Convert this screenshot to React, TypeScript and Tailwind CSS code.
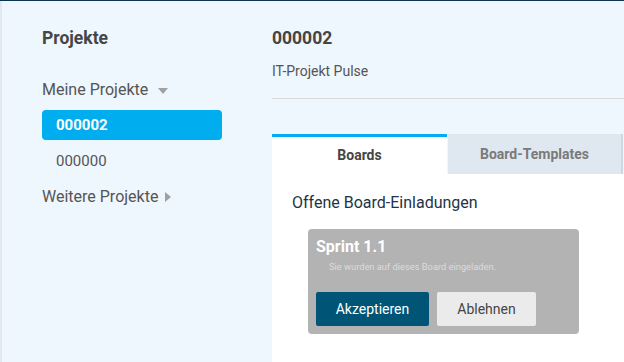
import React from 'react';

export default function App() {
  return (
    <div
      className="w-[624px] h-[362px] flex overflow-hidden bg-white border-t border-[#0b3650]"
      style={{ fontFamily: 'Roboto, "Liberation Sans", sans-serif' }}
    >
      {/* Sidebar */}
      <aside className="w-[272px] shrink-0 bg-[#eef6fe] border-l-2 border-[#e2e8ee] pl-[40px] pr-[50px] pt-[26px]">
        <h2 className="text-[17.5px] leading-[22px] font-bold text-[#454545]">Projekte</h2>
        <div className="mt-[30px] flex items-center text-[16px] leading-[22px] text-[#555]">
          Meine Projekte
          <span className="ml-[10px] mt-[2px] w-0 h-0 border-l-[5px] border-r-[5px] border-t-[6px] border-l-transparent border-r-transparent border-t-[#a0a0a0]" />
        </div>
        <div className="mt-[9px] h-[30px] rounded-[4px] bg-[#00aeef] flex items-center pl-[14px] text-[15px] font-bold text-white">
          000002
        </div>
        <div className="h-[40px] mt-[1px] flex items-center pl-[14px] text-[15px] text-[#555]">000000</div>
        <div className="flex items-center text-[16px] leading-[32px] text-[#555]">
          Weitere Projekte
          <span className="ml-[7px] w-0 h-0 border-t-[5px] border-b-[5px] border-l-[6px] border-t-transparent border-b-transparent border-l-[#a0a0a0]" />
        </div>
      </aside>

      {/* Main */}
      <main className="flex-1 flex flex-col">
        <div className="bg-[#eef6fe] h-[133px] flex flex-col">
          <div className="pt-[26px] text-[17.5px] leading-[22px] font-bold text-[#454545]">000002</div>
          <div className="mt-[13px] text-[14px] leading-[18px] text-[#555]">IT-Projekt Pulse</div>
          <div className="mt-[18px] border-t border-[#d9d9d9]" />
        </div>

        <div className="flex h-[40px] bg-[#eef6fe]">
          <div className="w-[175px] bg-white border-t-[3px] border-[#00aeef] flex items-center justify-center text-[14px] font-bold text-[#454545]">
            Boards
          </div>
          <div className="w-[175px] ml-[1px] bg-[#dfe8f0] border-r-2 border-[#cfd8e0] flex items-center justify-center text-[14px] font-bold text-[#7a7a7a]">
            Board-Templates
          </div>
        </div>

        <div className="flex-1 bg-white pl-[20px]">
          <div className="mt-[19px] text-[16px] leading-[20px] text-[#1e3446]">Offene Board-Einladungen</div>
          <div className="mt-[16px] ml-[16px] w-[271px] h-[105px] rounded-[4px] bg-[#b3b3b3] px-[8px] pt-[7px]">
            <div className="text-[16px] leading-[22px] font-bold text-white">Sprint 1.1</div>
            <div className="mt-[3px] pl-[13px] text-[9.3px] leading-[12px] text-[#dcdcdc]">
              Sie wurden auf dieses Board eingeladen.
            </div>
            <div className="mt-[19px] flex gap-[8px]">
              <button className="w-[113px] h-[34px] rounded-[2px] bg-[#005577] text-white text-[14px]">
                Akzeptieren
              </button>
              <button className="w-[99px] h-[34px] rounded-[2px] bg-[#ebebeb] text-[#454545] text-[14px]">
                Ablehnen
              </button>
            </div>
          </div>
        </div>
      </main>
    </div>
  );
}
